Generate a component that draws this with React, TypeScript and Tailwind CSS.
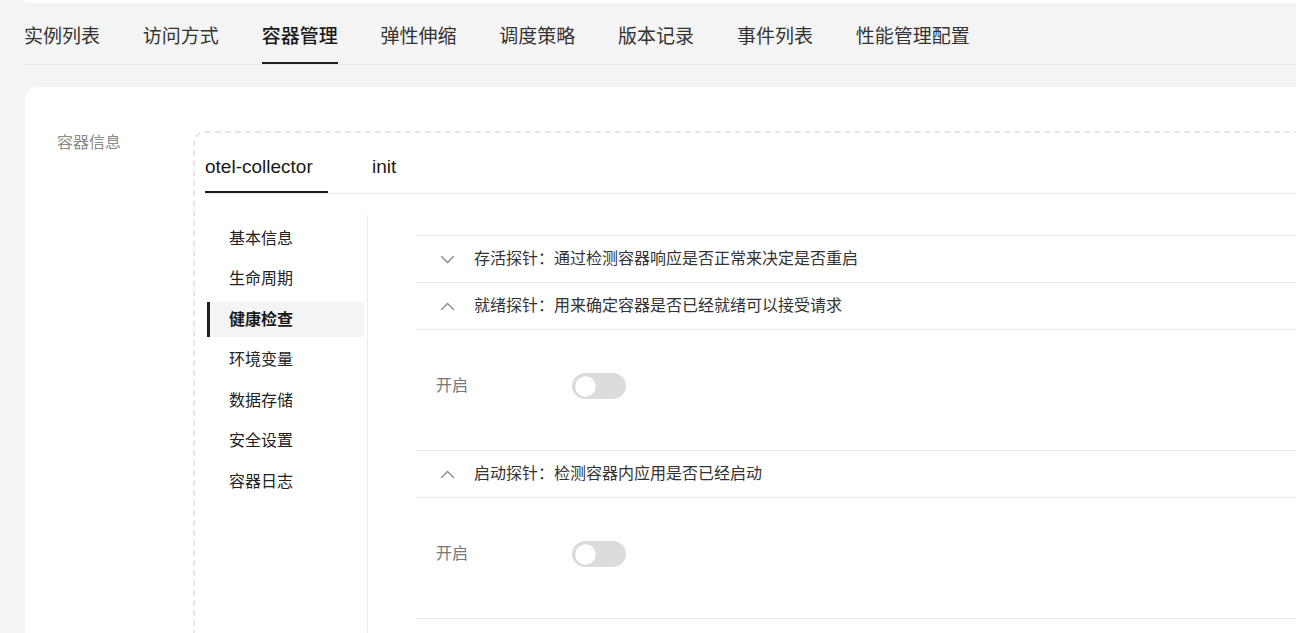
import React, { useState } from 'react';

const FONT = { fontFamily: '"Liberation Sans", "Noto Sans CJK SC", sans-serif' };

const TOP_TABS = ['实例列表', '访问方式', '容器管理', '弹性伸缩', '调度策略', '版本记录', '事件列表', '性能管理配置'];
const SIDE_NAV = ['基本信息', '生命周期', '健康检查', '环境变量', '数据存储', '安全设置', '容器日志'];

function Chevron({ up }: { up?: boolean }) {
  return (
    <svg width="15" height="9" viewBox="0 0 15 9" fill="none" className="shrink-0">
      <polyline
        points={up ? '1.5,7.5 7.5,1.5 13.5,7.5' : '1.5,1.5 7.5,7.5 13.5,1.5'}
        stroke="#8a8a8a"
        strokeWidth="1.4"
        strokeLinecap="round"
        strokeLinejoin="round"
      />
    </svg>
  );
}

function Toggle() {
  const [on, setOn] = useState(false);
  return (
    <button
      onClick={() => setOn(!on)}
      className={`flex items-center w-[54px] h-[26px] rounded-full p-[3px] ${on ? 'bg-[#1f1f1f] justify-end' : 'bg-[#dcdcdc] justify-start'}`}
    >
      <span className="w-[21px] h-[21px] rounded-full bg-white shadow-[0_0_1px_rgba(0,0,0,0.2)]" />
    </button>
  );
}

function ProbeSection({ title, open }: { title: string; open?: boolean }) {
  return (
    <div>
      <div className="flex items-center h-[47px] pl-[24px] gap-[19px] border-b border-[#ebebeb]">
        <Chevron up={open} />
        <span className="text-[16px] text-[#333] [text-spacing-trim:space-all]">{title}</span>
      </div>
      {open && (
        <div className="flex items-center h-[121px] pl-[20px] pb-[8px] border-b border-[#ebebeb]">
          <span className="w-[136px] text-[16px] text-[#777]">开启</span>
          <Toggle />
        </div>
      )}
    </div>
  );
}

export default function App() {
  const [tab, setTab] = useState('容器管理');
  const [nav, setNav] = useState('健康检查');
  const [container, setContainer] = useState('otel-collector');

  return (
    <div className="h-[633px] overflow-hidden bg-[#f4f4f4]" style={FONT}>
      <div className="w-[1340px]">
        {/* top card edge */}
        <div className="ml-[25px] h-[3px] bg-white rounded-bl-lg" />

        {/* Tabs */}
        <div className="ml-[24px] flex gap-[42.8px] border-b border-[#e6e6e6]">
          {TOP_TABS.map(t => (
            <button
              key={t}
              onClick={() => setTab(t)}
              className={`flex items-center h-[61px] pt-[10px] border-b-2 text-[19px] ${
                tab === t ? 'border-[#1f1f1f] text-[#1a1a1a] font-medium' : 'border-transparent text-[#333]'
              }`}
            >
              {t}
            </button>
          ))}
        </div>

        {/* Main card */}
        <div className="mt-[22px] ml-[25px] h-[600px] bg-white rounded-tl-xl flex pt-[44px] pl-[32px]">
          <div className="w-[136px] shrink-0 pt-[1px] text-[16px] leading-[22px] text-[#8a8a8a]">容器信息</div>

          <div className="flex-1 border-2 border-dashed border-[#e6e6e6] rounded-xl px-[10px]">
            {/* container tabs */}
            <div className="flex gap-[44px] border-b border-[#ebebeb]">
              {['otel-collector', 'init'].map(c => (
                <button
                  key={c}
                  onClick={() => setContainer(c)}
                  className={`flex items-center h-[60px] pt-[10px] text-[19px] text-[#1a1a1a] border-b-2 ${
                    container === c ? 'w-[123px] border-[#1f1f1f]' : 'border-transparent'
                  }`}
                >
                  {c}
                </button>
              ))}
            </div>

            <div className="flex mt-[21px]">
              {/* side nav */}
              <div className="w-[161px] ml-[2px] pr-[3px] pt-[6px] h-[420px] border-r border-[#ebebeb] flex flex-col gap-[5.5px]">
                {SIDE_NAV.map(n => (
                  <button
                    key={n}
                    onClick={() => setNav(n)}
                    className={`flex items-center h-[35px] pl-[19px] border-l-[3px] text-[16px] text-left ${
                      nav === n ? 'border-[#1f1f1f] bg-[#f4f4f4] font-bold text-[#1a1a1a]' : 'border-transparent text-[#222]'
                    }`}
                  >
                    {n}
                  </button>
                ))}
              </div>

              {/* probes */}
              <div className="flex-1 pl-[48px] pt-[20px]">
                <div className="border-t border-[#ebebeb]">
                  <ProbeSection title="存活探针：通过检测容器响应是否正常来决定是否重启" />
                  <ProbeSection title="就绪探针：用来确定容器是否已经就绪可以接受请求" open />
                  <ProbeSection title="启动探针：检测容器内应用是否已经启动" open />
                </div>
              </div>
            </div>
          </div>
        </div>
      </div>
    </div>
  );
}
